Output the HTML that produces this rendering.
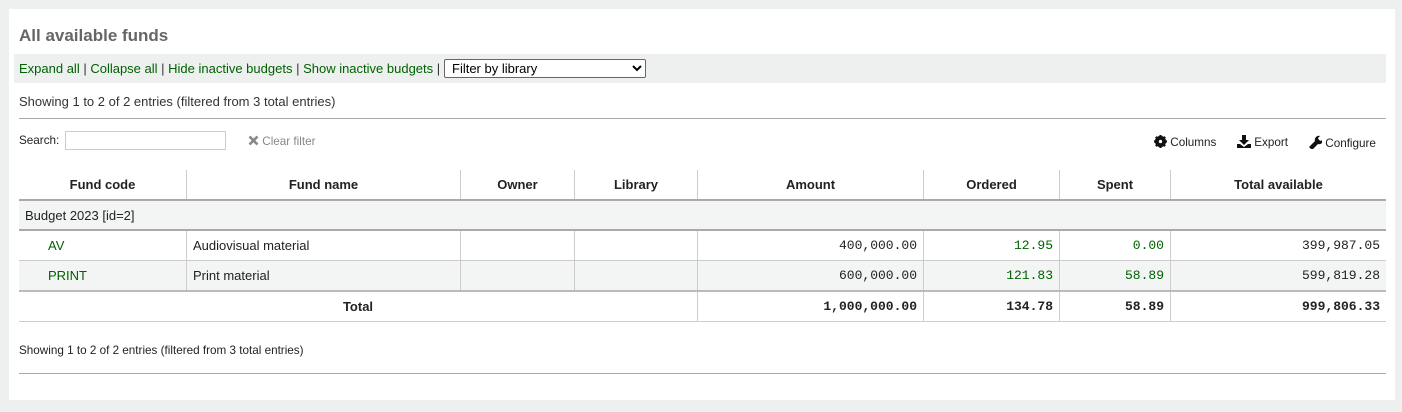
<!DOCTYPE html>
<html><head><style>
body{margin:0;background:#eef0f0;font-family:"Liberation Sans",sans-serif;width:1402px;height:412px;position:relative;overflow:hidden}
.panel{position:absolute;left:9px;top:9px;width:1386px;height:391px;background:#fff}
.a{position:absolute;white-space:nowrap}
h1{position:absolute;left:19px;top:26px;margin:0;font-size:17px;color:#666;font-weight:bold}
.bar{position:absolute;left:14px;top:54px;width:1372px;height:29px;background:#eef0f0}
a{color:#006100;text-decoration:none}
.links{left:19px;top:61px;font-size:13px;color:#333}
select{position:absolute;left:444px;top:59px;width:202px;height:19px;font-size:13px;font-family:"Liberation Sans",sans-serif;border:1px solid #666;border-radius:2px;background:#fff;padding:0 3px}
table{position:absolute;left:19px;top:170px;width:1367px;border-collapse:collapse;font-size:13px;color:#222}
td,th{border-left:1px solid #ccc;height:29px;padding:0 6px}
td:first-child,th:first-child{border-left:none}
th{font-weight:bold;border-bottom:2px solid #aaa}
.grp td{background:#f3f4f4;border-bottom:2px solid #aaa;height:28px}
.r td{border-bottom:1px solid #ccc;height:29px}
.r.alt td{border-bottom:none}
.alt td{background:#f3f4f4}
.n{text-align:right;font-family:"Liberation Mono",monospace}
.g{color:#006100}
.tot td{font-weight:bold;border-bottom:1px solid #ccc;border-top:2px solid #bbb;height:29px}
.small{font-size:11.7px;color:#222}
</style></head><body>
<div class="panel"></div>
<h1>All available funds</h1>
<div class="bar"></div>
<div class="a links"><a>Expand all</a> | <a>Collapse all</a> | <a>Hide inactive budgets</a> | <a>Show inactive budgets</a> |</div>
<select><option>Filter by library</option></select>
<div class="a" style="left:19px;top:94px;font-size:13px;color:#333">Showing 1 to 2 of 2 entries (filtered from 3 total entries)</div>
<div class="a" style="left:19px;top:118px;width:1367px;border-top:1px solid #aaa"></div>
<div class="a small" style="left:19px;top:134px">Search:</div>
<div class="a" style="left:65px;top:131px;width:159px;height:17px;border:1px solid #ccc"></div>
<div class="a small" style="left:248px;top:135px;color:#888"><svg width="11" height="11" viewBox="0 0 11 11" style="vertical-align:-1px"><path d="M1.5 1.5l8 8M9.5 1.5l-8 8" stroke="#888" stroke-width="2.6"/></svg> Clear filter</div>
<div class="a small" style="left:1154px;top:135px"><svg width="13" height="13" viewBox="0 0 14 14" style="vertical-align:-2px"><circle cx="7" cy="7" r="4.5" fill="none" stroke="#111" stroke-width="3"/><path d="M7 0v14M0 7h14M2 2l10 10M12 2L2 12" stroke="#111" stroke-width="2.4"/><circle cx="7" cy="7" r="1.8" fill="#fff"/></svg> Columns</div>
<div class="a small" style="left:1237px;top:135px"><svg width="14" height="13" viewBox="0 0 14 13" style="vertical-align:-2px"><path d="M5 0h4v5h3l-5 5-5-5h3z M0 9h3l4 3 4-3h3v4H0z" fill="#111"/></svg> Export</div>
<div class="a small" style="left:1308px;top:135px"><svg width="14" height="14" viewBox="0 0 14 14" style="vertical-align:-2px"><path d="M1 12l6-6a4 4 0 0 1 5-5l-2 2 1 2 2 1 2-2a4 4 0 0 1-5 5l-6 6z" fill="#111"/></svg> Configure</div>
<table>
<tr><th style="width:155px">Fund code</th><th style="width:261px">Fund name</th><th style="width:101px">Owner</th><th style="width:110px">Library</th><th style="width:213px">Amount</th><th style="width:123px">Ordered</th><th style="width:98px">Spent</th><th>Total available</th></tr>
<tr class="grp"><td colspan="8">Budget 2023 [id=2]</td></tr>
<tr class="r"><td style="padding-left:29px"><a>AV</a></td><td>Audiovisual material</td><td></td><td></td><td class="n">400,000.00</td><td class="n g">12.95</td><td class="n g">0.00</td><td class="n">399,987.05</td></tr>
<tr class="r alt"><td style="padding-left:29px"><a>PRINT</a></td><td>Print material</td><td></td><td></td><td class="n">600,000.00</td><td class="n g">121.83</td><td class="n g">58.89</td><td class="n">599,819.28</td></tr>
<tr class="tot"><td colspan="4" style="text-align:center">Total</td><td class="n">1,000,000.00</td><td class="n">134.78</td><td class="n">58.89</td><td class="n">999,806.33</td></tr>
</table>
<div class="a small" style="left:19px;top:344px">Showing 1 to 2 of 2 entries (filtered from 3 total entries)</div>
<div class="a" style="left:19px;top:373px;width:1367px;border-top:1px solid #aaa"></div>
</body></html>
